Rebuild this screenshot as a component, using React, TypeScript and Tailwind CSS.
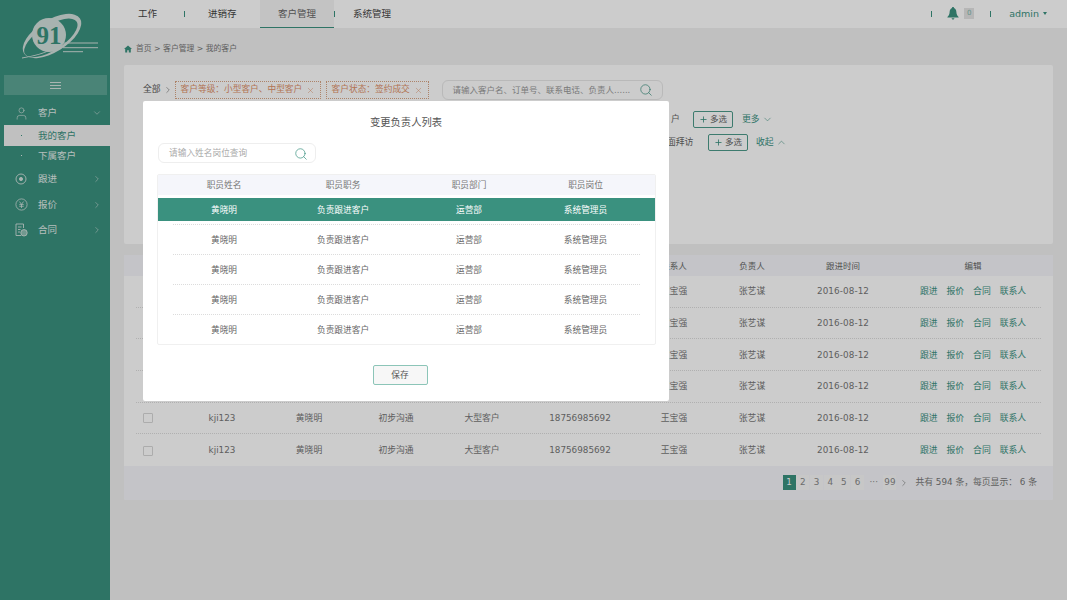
import { Search, User, ChevronDown, ChevronRight, ChevronUp, X, Plus } from "lucide-react";

const rowCols = "grid grid-cols-[54px_64px_110px_64px_108px_88px_100px_56px_126px_134px] items-center";
const modalCols = "grid grid-cols-[132px_106px_146px_87px] items-center pt-[2px]";

function Logo() {
  return (
    <svg width="86" height="50" viewBox="0 0 86 50" className="text-[#d3e0dc]">
      <g transform="rotate(-32 36 23)">
        <ellipse cx="36" cy="23" rx="33" ry="16" fill="currentColor" />
        <ellipse cx="34" cy="24" rx="30.5" ry="12.5" fill="#3a917f" />
      </g>
      <circle cx="33" cy="22" r="17" fill="currentColor" />
      <text x="33" y="31" textAnchor="middle" fontSize="25" fontWeight="700" fill="#3a917f" fontFamily="'Liberation Serif', serif">91</text>
      <path d="M6 44.5 Q24 42 41 34 Q28 42 6 45.5 Z" fill="currentColor" />
      <path d="M47 30 H82 M47 34.7 H82 M47 38.7 H67" stroke="currentColor" strokeWidth="1" />
    </svg>
  );
}

function TargetIcon() {
  return (
    <svg width="12" height="12" viewBox="0 0 12 12" fill="none" stroke="#d5e3df" strokeWidth="0.9">
      <circle cx="6" cy="6" r="5" />
      <circle cx="6" cy="6" r="1.6" fill="#d5e3df" />
    </svg>
  );
}

function YenIcon() {
  return (
    <svg width="13" height="13" viewBox="0 0 13 13" fill="none" stroke="#d5e3df" strokeWidth="0.8">
      <circle cx="6.5" cy="6.5" r="5.6" />
      <path d="M4.5 3.6 L6.5 6.4 L8.5 3.6 M4.3 6.6 H8.7 M4.3 8.3 H8.7 M6.5 6.4 V10" />
    </svg>
  );
}

function ContractIcon() {
  return (
    <svg width="13" height="14" viewBox="0 0 13 14" fill="none" stroke="#d5e3df" strokeWidth="0.9">
      <path d="M8.5 5 V1 H1 V12.5 H6" />
      <path d="M3 4 H6.5 M3 6.5 H5.5 M3 9 H5" />
      <circle cx="9" cy="9.8" r="3.2" fill="#d5e3df" fillOpacity="0.55" />
    </svg>
  );
}

function Home() {
  return (
    <svg width="8" height="8" viewBox="0 0 10 10" fill="#3a917f">
      <path d="M5 0.5 L10 5 H8.5 V9.5 H6 V6.5 H4 V9.5 H1.5 V5 H0 Z" />
    </svg>
  );
}

function Bell() {
  return (
    <svg width="12" height="13" viewBox="0 0 12 13" fill="#3a917f">
      <path d="M6 0 C6.8 0 7 0.6 7 1.1 C8.8 1.8 9.3 3.4 9.4 5.2 C9.5 7.4 10.3 8.8 11.6 10 V10.6 H0.4 V10 C1.7 8.8 2.5 7.4 2.6 5.2 C2.7 3.4 3.2 1.8 5 1.1 C5 0.6 5.2 0 6 0 Z M4.6 11.2 H7.4 C7.3 12.1 6.7 12.6 6 12.6 C5.3 12.6 4.7 12.1 4.6 11.2 Z" />
    </svg>
  );
}

function MenuItem({ icon, label }: { icon: React.ReactNode; label: string }) {
  return (
    <div className="flex h-[25.5px] items-center pt-[1px] text-[9.5px] text-[#e4eeeb]">
      <span className="flex w-[38px] justify-center pl-[7px] pr-[3px]">{icon}</span>
      <span className="flex-1">{label}</span>
      <ChevronRight size={10} strokeWidth={1.3} className="mr-[8px] text-[#d5e3df]" />
    </div>
  );
}

function Sidebar() {
  return (
    <aside className="flex h-full w-[110px] shrink-0 flex-col bg-[#3a917f]">
      <div className="flex h-[75px] justify-center pl-[8px] pt-[13px]">
        <Logo />
      </div>
      <div className="ml-[4px] flex h-[20px] w-[103px] flex-col items-center justify-center gap-[2px] bg-[#5da595]">
        <span className="h-px w-[11px] bg-[#d5e3df]" />
        <span className="h-px w-[11px] bg-[#d5e3df]" />
        <span className="h-px w-[11px] bg-[#d5e3df]" />
      </div>
      <div className="flex h-[30px] items-center pt-[6px] text-[9.5px] text-[#e4eeeb]">
        <span className="flex w-[38px] justify-center pl-[7px] pr-[3px]">
          <User size={15} strokeWidth={1} className="text-[#d5e3df]" />
        </span>
        <span className="flex-1">客户</span>
        <ChevronDown size={10} strokeWidth={1.3} className="mr-[8px] text-[#d5e3df]" />
      </div>
      <div className="relative ml-[4px] flex h-[21px] items-center bg-[#f0f0f0] pl-[34px] pt-[1px] text-[9.5px] text-[#3a917f]">
        <span className="absolute left-[17px] top-[10px] h-px w-px bg-[#3a917f]" />
        我的客户
      </div>
      <div className="relative ml-[4px] flex h-[20px] items-center pl-[34px] text-[9.5px] text-[#e4eeeb]">
        <span className="absolute left-[17px] top-[9px] h-px w-px bg-[#e4eeeb]" />
        下属客户
      </div>
      <MenuItem icon={<TargetIcon />} label="跟进" />
      <MenuItem icon={<YenIcon />} label="报价" />
      <MenuItem icon={<ContractIcon />} label="合同" />
    </aside>
  );
}

function TopBar() {
  const sep = <span className="h-[6px] w-px bg-[#3a917f]" />;
  return (
    <header className="flex h-[27.5px] items-stretch bg-white text-[9.5px] text-[#444]">
      <div className="flex items-center pl-[28px] pt-[1px]">
        <span className="w-[46px]">工作</span>
        {sep}
        <span className="w-[75px] pl-[23px]">进销存</span>
        <span className="-mt-[1px] flex h-[27.5px] w-[74px] items-center justify-center border-b-[1.5px] border-[#3a917f] bg-[#f4f4f4] pt-[1px] text-[#666]">客户管理</span>
        {sep}
        <span className="pl-[18px]">系统管理</span>
      </div>
      <div className="ml-auto flex items-center text-[#3a917f]">
        {sep}
        <span className="ml-[15px] -mt-[1px]"><Bell /></span>
        <span className="ml-[5px] -mt-[1px] flex h-[11px] w-[10px] items-center justify-center bg-[#e4e4e4] text-[7px] text-[#7fb9ad]">0</span>
        <span className="ml-[16px] h-[6px] w-px bg-[#3a917f]" />
        <span className="ml-[18px]">admin</span>
        <span className="ml-[4px] mr-[20px] h-0 w-0 border-x-[2px] border-t-[3px] border-x-transparent border-t-[#3a917f]" />
      </div>
    </header>
  );
}

function Tag({ text, className }: { text: string; className: string }) {
  return (
    <span className={`flex h-[18px] items-center justify-between whitespace-nowrap border border-dotted border-[#d9a484] px-[5px] text-[8.7px] text-[#e0916a] ${className}`}>
      {text}
      <X size={9} strokeWidth={1.2} />
    </span>
  );
}

function MultiButton() {
  return (
    <span className="flex h-[17px] w-[40px] items-center justify-center gap-[2px] rounded-[2px] border border-[#4d9a8a] text-[8.5px] text-[#666]">
      <Plus size={9} strokeWidth={2.2} className="text-[#3a917f]" />
      多选
    </span>
  );
}

function FilterCard() {
  return (
    <section className="mx-[14px] h-[179px] rounded-[2px] bg-white pl-[19px] pt-[15px]">
      <div className="flex h-[20px] items-center text-[8.8px] text-[#555]">
        <span>全部</span>
        <ChevronRight size={10} strokeWidth={1.2} className="ml-[2px] mr-[2px]" />
        <Tag text="客户等级：小型客户、中型客户" className="w-[146px]" />
        <Tag text="客户状态：签约成交" className="ml-[5px] w-[103px]" />
        <div className="ml-[13px] flex h-[20px] w-[221px] items-center justify-between rounded-[6px] border border-[#e8e8e8] pl-[10px] pr-[9px] text-[8.5px] text-[#999]">
          请输入客户名、订单号、联系电话、负责人......
          <Search size={14} strokeWidth={1.2} className="text-[#3a917f]" />
        </div>
      </div>
      <div className="mt-[11px] flex h-[17px] items-center pl-[528px] text-[8.8px] text-[#666]">
        <span className="w-[22px]">户</span>
        <MultiButton />
        <span className="ml-[9px] flex items-center gap-[2px] text-[#3a917f]">更多<ChevronDown size={11} strokeWidth={1.2} /></span>
      </div>
      <div className="mt-[6px] flex h-[17px] items-center pl-[524px] text-[8.8px] text-[#666]">
        <span className="w-[41px]">面拜访</span>
        <MultiButton />
        <span className="ml-[8px] flex items-center gap-[2px] text-[#3a917f]">收起<ChevronUp size={11} strokeWidth={1.2} /></span>
      </div>
    </section>
  );
}

function CustomerTable() {
  const head = ["", "", "", "", "", "", "联系人", "负责人", "跟进时间", "编辑"];
  return (
    <section className="mx-[14px] mt-[11px] h-[245px] rounded-[2px] bg-white">
      <div className="h-[21px] bg-[#f5f6fa] px-[12px]">
        <div className={`${rowCols} h-full pt-[1px] text-center text-[8.5px] text-[#666]`}>
          {head.map((h, i) => <span key={i}>{h}</span>)}
        </div>
      </div>
      <div className="px-[12px]">
        {[0, 1, 2, 3, 4, 5].map((i) => (
          <div key={i} className={`${rowCols} h-[31.67px] border-b border-dotted border-[#dcdcdc] pt-[1px] text-center text-[8.8px] text-[#777] last:border-b-0`}>
            <span className="flex pl-[7px]">{i > 3 && <span className="h-[10px] w-[10px] rounded-[1px] border border-[#d8d8d8]" />}</span>
            <span>{i > 3 && "kji123"}</span>
            <span>{i > 3 && "黄晓明"}</span>
            <span>{i > 3 && "初步沟通"}</span>
            <span>{i > 3 && "大型客户"}</span>
            <span>{i > 3 && "18756985692"}</span>
            <span>王宝强</span>
            <span>张艺谋</span>
            <span className="tracking-[0.1px]">2016-08-12</span>
            <span className="flex justify-center gap-[9px] text-[#3a917f]">
              <span>跟进</span><span>报价</span><span>合同</span><span>联系人</span>
            </span>
          </div>
        ))}
      </div>
      <div className="flex h-[34px] items-center justify-end rounded-b-[2px] bg-[#f5f6fa] pr-[16px] text-[8.8px] text-[#888]">
        <div className="flex items-center gap-[0.7px]">
          <span className="flex h-[15px] w-[13px] items-center justify-center bg-[#3a917f] text-white">1</span>
          {[2, 3, 4, 5, 6].map((n) => (
            <span key={n} className="flex h-[15px] w-[13px] items-center justify-center bg-[#f9f9f9]">{n}</span>
          ))}
          <span className="w-[18px] text-center">···</span>
          <span className="flex h-[15px] w-[13px] items-center justify-center bg-[#f9f9f9]">99</span>
        </div>
        <ChevronRight size={10} strokeWidth={1.3} className="ml-[3px] mr-[6px] text-[#666]" />
        <span className="text-[#777]">共有 594 条，每页显示： 6 条</span>
      </div>
    </section>
  );
}

function Modal() {
  const row = ["黄晓明", "负责跟进客户", "运营部", "系统管理员"];
  return (
    <div className="absolute left-[143px] top-[101px] h-[300px] w-[526px] rounded-[2px] bg-white px-[14px] text-[8.7px] text-[#666]">
      <h2 className="pt-[14px] text-center text-[10.3px] font-normal leading-[15px] text-[#555]">变更负责人列表</h2>
      <div className="ml-[1px] mt-[13px] flex h-[20px] w-[158px] items-center justify-between rounded-[6px] border border-[#eee] pl-[10px] pr-[7px] pt-[1px] text-[#aaa]">
        请输入姓名岗位查询
        <Search size={14} strokeWidth={1.2} className="text-[#3a917f]" />
      </div>
      <div className="mt-[11px] h-[171px] w-[499px] rounded-[2px] border border-[#f0f0f0]">
        <div className={`${modalCols} h-[20px] bg-[#f5f6fb] text-center text-[#777]`}>
          <span>职员姓名</span><span>职员职务</span><span>职员部门</span><span>职员岗位</span>
        </div>
        <div className={`${modalCols} mt-[3px] h-[23px] bg-[#3a917f] text-center text-white`}>
          {row.map((t) => <span key={t}>{t}</span>)}
        </div>
        <div className="mt-[3px]">
          {[0, 1, 2, 3].map((i) => (
            <div key={i} className="h-[30px]">
              <div className="mx-[15px] border-t border-dotted border-[#dcdcdc]" />
              <div className={`${modalCols} h-[29px] text-center`}>
                {row.map((t) => <span key={t}>{t}</span>)}
              </div>
            </div>
          ))}
        </div>
      </div>
      <div className="mt-[20px] flex justify-center pr-[12px]">
        <button className="h-[20px] w-[55px] rounded-[2px] border border-[#8cc5b8] bg-[#f7f7f7] pt-[1px] text-[8.7px] text-[#555]">保存</button>
      </div>
    </div>
  );
}

export default function App() {
  return (
    <div className="relative flex h-[600px] w-[1067px] overflow-hidden bg-[#f0f0f0] font-['DejaVu_Sans','Noto_Sans_CJK_SC',sans-serif]">
      <Sidebar />
      <main className="min-w-0 flex-1">
        <TopBar />
        <div className="flex h-[37.5px] items-center gap-[4px] pl-[14px] pt-[5px] text-[7.8px] text-[#777]">
          <Home />
          <span>首页 &gt; 客户管理 &gt; 我的客户</span>
        </div>
        <FilterCard />
        <CustomerTable />
      </main>
      <div className="absolute inset-0 bg-black/20" />
      <Modal />
    </div>
  );
}
